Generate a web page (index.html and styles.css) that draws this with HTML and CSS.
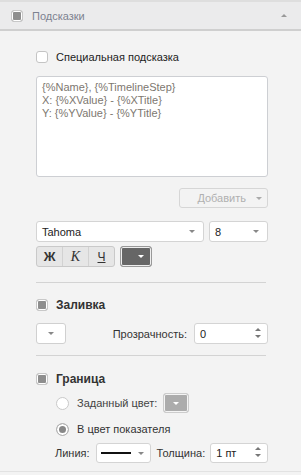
FILE: index.html
```html
<!DOCTYPE html>
<html lang="ru">
<head>
    <meta charset="UTF-8">
    <title>Подсказки</title>
    <link rel="stylesheet" href="styles.css">
</head>
<body>
    <div class="panel">
        <div class="panel-header">
            <span class="check check-dark"></span>
            <span class="panel-title">Подсказки</span>
            <span class="collapse-arrow"></span>
        </div>
        <div class="panel-body">
            <label class="row check-row">
                <span class="check"></span>
                <span>Специальная подсказка</span>
            </label>
            <div class="textarea">{%Name}, {%TimelineStep}<br>X: {%XValue} - {%XTitle}<br>Y: {%YValue} - {%YTitle}</div>
            <div class="add-row">
                <div class="btn btn-disabled add-btn">Добавить <span class="caret"></span></div>
            </div>
            <div class="font-row">
                <div class="select font-select">Tahoma <span class="caret"></span></div>
                <div class="select size-select">8 <span class="caret"></span></div>
            </div>
            <div class="style-row">
                <div class="btn-group">
                    <span class="seg seg-bold">Ж</span>
                    <span class="seg seg-italic">К</span>
                    <span class="seg seg-under">Ч</span>
                </div>
                <div class="color-btn dark"><span class="caret caret-white"></span></div>
            </div>

            <hr class="divider">

            <div class="row section-title fill-title">
                <span class="check check-dark"></span>
                <span>Заливка</span>
            </div>
            <div class="fill-row">
                <div class="color-btn light"><span class="caret"></span></div>
                <span class="field-label">Прозрачность:</span>
                <div class="spinner opacity-spin">0 <span class="spin"></span></div>
            </div>

            <hr class="divider divider-low">

            <div class="row section-title border-title">
                <span class="check check-dark"></span>
                <span>Граница</span>
            </div>
            <div class="row radio-row radio-first">
                <span class="radio"></span>
                <span class="muted-text">Заданный цвет:</span>
                <div class="color-btn gray small"><span class="caret caret-white"></span></div>
            </div>
            <div class="row radio-row radio-second">
                <span class="radio radio-on"></span>
                <span>В цвет показателя</span>
            </div>
            <div class="line-row">
                <span>Линия:</span>
                <div class="select line-select"><span class="line-sample"></span><span class="caret"></span></div>
                <span class="width-label">Толщина:</span>
                <div class="spinner width-spin">1 пт <span class="spin"></span></div>
            </div>
        </div>
    </div>
</body>
</html>
```

FILE: styles.css
```css
body {
    margin: 0;
    font-family: "Liberation Sans", Tahoma, Arial, sans-serif;
    font-size: 11px;
    color: #333;
    background: #f3f3f3;
}
.panel {
    border-top: 2px solid #dedede;
    height: 472px;
    border-bottom: 1px solid #e2e2e2;
    box-sizing: border-box;
}
.panel-header {
    display: flex;
    align-items: center;
    height: 27px;
    padding: 0 14px 0 11px;
    background: #ebebec;
    border-bottom: 2px solid #cfcfcf;
}
.panel-title {
    margin-left: 9px;
    color: #7d8290;
    flex: 1;
}
.collapse-arrow {
    width: 0;
    height: 0;
    border-left: 3px solid transparent;
    border-right: 3px solid transparent;
    border-bottom: 3px solid #999;
}
.panel-body {
    padding: 19px 33px 0 36px;
}
.row {
    display: flex;
    align-items: center;
}
.check {
    width: 10px;
    height: 10px;
    border: 1px solid #c4c4c4;
    border-radius: 3px;
    background: #fff;
    margin-right: 8px;
    flex: none;
}
.panel-header .check {
    margin-right: 0;
}
.check-dark {
    background: #8e8e8e;
    border-color: #c8c8c8;
    box-shadow: inset 0 0 0 1px #fff;
}
.check-row {
    height: 14px;
    color: #222;
}
.textarea {
    margin-top: 12px;
    height: 91px;
    border: 1px solid #cdcfd3;
    border-radius: 3px;
    background: #fff;
    padding: 4px 5px;
    color: #7d776f;
    line-height: 13px;
}
.add-row {
    display: flex;
    justify-content: flex-end;
    margin-top: 11px;
}
.btn {
    display: flex;
    align-items: center;
    justify-content: flex-end;
    border: 1px solid #d6d6d6;
    border-radius: 3px;
    box-sizing: border-box;
}
.add-btn {
    width: 89px;
    height: 20px;
    padding-right: 5px;
    color: #b0b0b0;
    gap: 10px;
}
.caret {
    display: inline-block;
    width: 0;
    height: 0;
    border-left: 3px solid transparent;
    border-right: 3px solid transparent;
    border-top: 3px solid #888;
}
.btn-disabled .caret {
    border-top-color: #aaa;
}
.caret-white {
    border-top-color: #fff;
}
.font-row {
    display: flex;
    gap: 5px;
    margin-top: 13px;
}
.select {
    display: flex;
    align-items: center;
    justify-content: space-between;
    height: 21px;
    box-sizing: border-box;
    padding: 0 8px 0 5px;
    background: #fff;
    border: 1px solid #d4d4d4;
    border-radius: 3px;
    color: #222;
}
.font-select {
    width: 168px;
}
.size-select {
    flex: 1;
}
.style-row {
    display: flex;
    gap: 5px;
    margin-top: 4px;
}
.btn-group {
    display: flex;
    height: 21px;
    border: 1px solid #c9c9c9;
    border-radius: 3px;
    background: #e6e6e6;
    box-sizing: border-box;
}
.seg {
    width: 25px;
    display: flex;
    align-items: center;
    justify-content: center;
    border-left: 1px solid #d2d2d2;
    color: #333;
}
.seg:first-child {
    border-left: none;
}
.seg-bold {
    font-weight: bold;
    font-size: 13px;
}
.seg-italic {
    font-family: "Liberation Serif", serif;
    font-style: italic;
    font-size: 14px;
}
.seg-under {
    text-decoration: underline;
    font-size: 12px;
}
.color-btn {
    display: flex;
    align-items: center;
    justify-content: center;
    width: 32px;
    height: 21px;
    box-sizing: border-box;
    border-radius: 3px;
    border: 1px solid #bdbdbd;
}
.color-btn.dark {
    background: #666;
    box-shadow: inset 0 0 0 1px #eee;
    border-color: #999;
    padding-left: 10px;
}
.color-btn.light {
    width: 30px;
    height: 21px;
    background: #fff;
    border-color: #d0d0d0;
}
.color-btn.gray {
    background: #acacac;
    box-shadow: inset 0 0 0 1px #f4f4f4;
    border-color: #ccc;
}
.color-btn.small {
    width: 26px;
    height: 20px;
    margin-left: 6px;
}
.divider {
    border: none;
    border-top: 1px solid #d3d3d3;
    margin: 15px 2px 0 0;
}
.divider-low {
    margin-top: 11px;
}
.section-title {
    font-weight: bold;
    font-size: 12px;
    height: 14px;
    color: #333;
}
.fill-title {
    margin-top: 15px;
}
.fill-row {
    display: flex;
    align-items: center;
    margin-top: 11px;
}
.field-label {
    margin-left: auto;
    margin-right: 7px;
}
.spinner {
    display: flex;
    align-items: center;
    justify-content: space-between;
    height: 21px;
    box-sizing: border-box;
    background: #fff;
    border: 1px solid #d4d4d4;
    border-radius: 3px;
    padding: 0 9px 0 5px;
    color: #222;
}
.opacity-spin {
    width: 74px;
}
.spin {
    width: 0;
    height: 8px;
    position: relative;
}
.spin::before,
.spin::after {
    content: "";
    position: absolute;
    left: -3px;
    border-left: 3px solid transparent;
    border-right: 3px solid transparent;
}
.spin::before {
    top: -2px;
    border-bottom: 3px solid #777;
}
.spin::after {
    top: 5px;
    border-top: 3px solid #777;
}
.border-title {
    margin-top: 16px;
}
.radio-row {
    padding-left: 20px;
}
.radio-first {
    margin-top: 7px;
    height: 20px;
}
.radio-second {
    margin-top: 9px;
    height: 14px;
}
.radio {
    width: 11px;
    height: 11px;
    border: 1px solid #c9c9c9;
    border-radius: 50%;
    background: #fff;
    margin-right: 8px;
}
.radio-on {
    background: #888;
    box-shadow: inset 0 0 0 2px #fff;
    border-color: #b5b5b5;
}
.muted-text {
    color: #444;
}
.line-row {
    display: flex;
    align-items: center;
    margin-top: 7px;
    padding-left: 19px;
}
.line-select {
    width: 55px;
    height: 20px;
    margin-left: 6px;
    padding: 0 6px 0 4px;
}
.line-sample {
    width: 30px;
    border-top: 2px solid #111;
}
.width-label {
    margin-left: 6px;
    margin-right: 5px;
}
.width-spin {
    flex: 1;
    height: 20px;
}
```
